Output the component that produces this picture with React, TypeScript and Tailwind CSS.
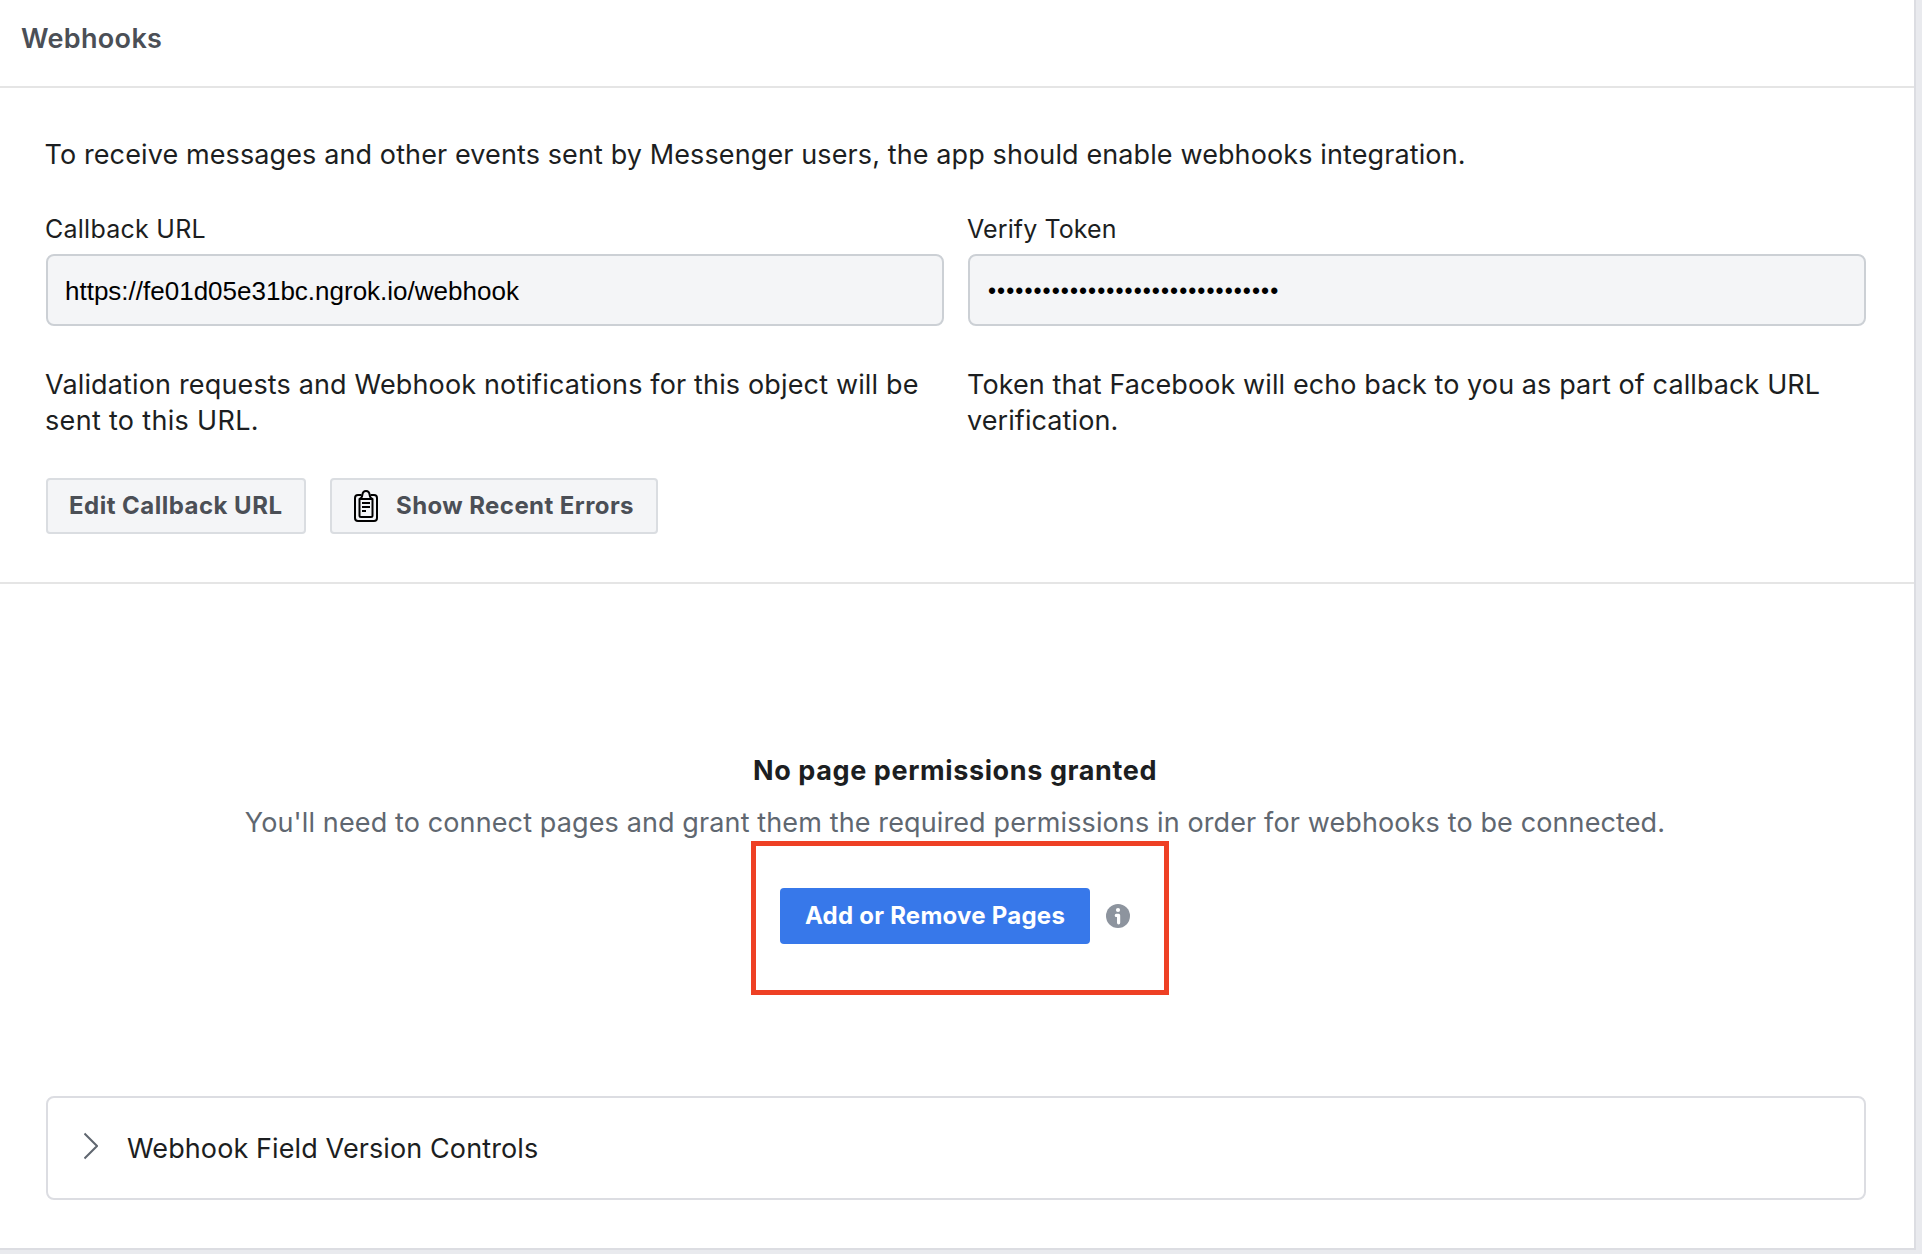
import type { ReactNode } from "react";

function ClipboardIcon() {
  return (
    <svg width="24" height="32" viewBox="0 0 24 32" fill="none" stroke="#000" strokeWidth="2" strokeLinejoin="round" className="shrink-0">
      <path d="M7.5 5H4a3 3 0 0 0-3 3v20a3 3 0 0 0 3 3h16a3 3 0 0 0 3-3V8a3 3 0 0 0-3-3h-3.500" />
      <path d="M5.500 9C7.500 8.500 8 7.500 8.300 5.200C8.600 2.600 10 1 12 1s3.400 1.600 3.700 4.200C16 7.500 16.500 8.500 18.500 9" />
      <path d="M5.500 9h13v16.500a1.500 1.500 0 0 1-1.500 1.500H7a1.500 1.500 0 0 1-1.500-1.500z" />
      <path d="M8 13h8M8 17h8M8 21h4" />
    </svg>
  );
}

function InfoIcon() {
  return (
    <svg width="24" height="24" viewBox="0 0 24 24" className="shrink-0">
      <circle cx="12" cy="12" r="12" fill="#8d949e" />
      <circle cx="12" cy="6" r="2.100" fill="#fff" />
      <path d="M10.300 11.400h2.300v7.400" fill="none" stroke="#fff" strokeWidth="3.200" strokeLinecap="round" strokeLinejoin="round" />
    </svg>
  );
}

function ChevronRight() {
  return (
    <svg width="14" height="28" viewBox="0 0 14 28" fill="none" stroke="#606770" strokeWidth="2" className="shrink-0">
      <path d="M0.500 1.500L13 14L0.500 26.500" />
    </svg>
  );
}

function Field({ label, value, help }: { label: ReactNode; value: ReactNode; help: ReactNode }) {
  return (
    <div className="w-[898px]">
      <div className="-ml-px h-8 text-[25px] leading-8">{label}</div>
      <div className="mt-[9px] flex h-[72px] items-center rounded-lg border-2 border-[#ccd0d5] bg-[#f4f5f7] pl-[17px] pt-0.5 font-['Liberation_Sans',sans-serif] text-[26px] leading-8 text-black">
        {value}
      </div>
      <p className="-ml-px mt-[41px] whitespace-nowrap text-[27px] leading-9">{help}</p>
    </div>
  );
}

function SecondaryButton({ className, children }: { className: string; children: ReactNode }) {
  return (
    <button className={`flex h-14 items-center whitespace-nowrap rounded border-2 border-[#dadde1] bg-[#f4f5f7] text-[24px] font-bold leading-8 text-[#4b4f56] ${className}`}>
      {children}
    </button>
  );
}

export default function App() {
  return (
    <div className="h-[1254px] w-[1922px] overflow-hidden bg-[#e9eaee] font-['Inter',sans-serif] text-[#1c1e21]">
      <main className="h-[1250px] w-[1916px] border-b-2 border-r-2 border-[#dcdde2] bg-white">
        <header className="h-[88px] border-b-2 border-[#e5e5e5] pl-[21px] pt-[21px]">
          <h1 className="text-[27px] font-semibold leading-9 tracking-[0.33px] text-[#4b4f56]">Webhooks</h1>
        </header>

        <section className="h-[496px] border-b-2 border-[#e5e5e5] pl-[46px] pt-[49px]">
          <p className="-ml-[1.5px] whitespace-nowrap text-[27px] leading-9 tracking-[0.11px]">
            To receive messages and other events sent by Messenger users, the app should enable webhooks integration.
          </p>
          <div className="mt-10 flex gap-6">
            <Field
              label={<span className="tracking-[0.25px]">Callback URL</span>}
              value="https://fe01d05e31bc.ngrok.io/webhook"
              help={
                <span className="tracking-[0.15px]">
                  Validation requests and Webhook notifications for this object will be
                  <br />
                  <span className="tracking-[0.32px]">sent to this URL.</span>
                </span>
              }
            />
            <Field
              label={<span className="tracking-[0.1px]">Verify Token</span>}
              value={<span className="pl-px text-[23px] tracking-[1.05px]">{"•".repeat(32)}</span>}
              help={
                <span className="tracking-[0.09px]">
                  Token that Facebook will echo back to you as part of callback URL
                  <br />
                  verification.
                </span>
              }
            />
          </div>
          <div className="mt-[39px] flex gap-6">
            <SecondaryButton className="w-[260px] pl-[21px] tracking-[0.48px]">Edit Callback URL</SecondaryButton>
            <SecondaryButton className="w-[328px] pl-[22px] tracking-[0.42px]">
              <ClipboardIcon />
              <span className="ml-[18px]">Show Recent Errors</span>
            </SecondaryButton>
          </div>
        </section>

        <section className="flex h-[512px] flex-col items-center pr-1 pt-[169px]">
          <h2 className="whitespace-nowrap text-[27px] font-bold leading-9 tracking-[0.61px]">No page permissions granted</h2>
          <p className="mt-4 whitespace-nowrap text-[27px] leading-9 tracking-[0.12px] text-[#606770]">
            You'll need to connect pages and grant them the required permissions in order for webhooks to be connected.
          </p>
          <div className="relative mt-[47px] flex items-center gap-4">
            <button className="flex h-14 w-[310px] items-center justify-center whitespace-nowrap rounded bg-[#3778ea] text-[24px] font-bold leading-8 tracking-[0.25px] text-white">
              Add or Remove Pages
            </button>
            <InfoIcon />
            <div className="absolute -left-[29px] -top-[47px] h-[154px] w-[418px] border-[5px] border-[#ee4024]" />
          </div>
        </section>

        <button className="ml-[46px] flex h-[104px] w-[1820px] items-center rounded-lg border-2 border-[#dcdde2] pl-9 text-[27px] leading-9 tracking-[0.1px]">
          <span className="-mt-1">
            <ChevronRight />
          </span>
          <span className="ml-[29px] pt-0.5">Webhook Field Version Controls</span>
        </button>
      </main>
    </div>
  );
}
